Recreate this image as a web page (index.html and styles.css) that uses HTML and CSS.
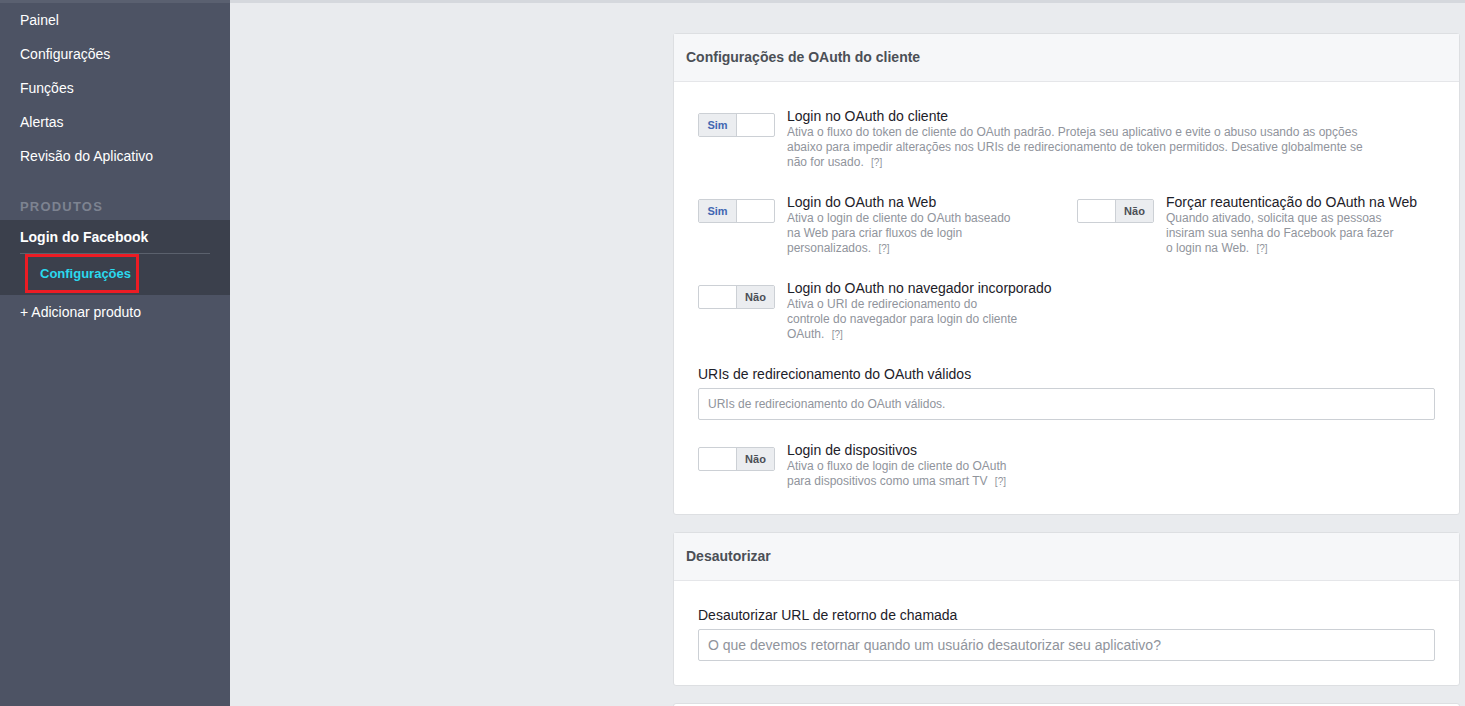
FILE: index.html
```html
<!DOCTYPE html>
<html lang="pt">
<head>
<meta charset="utf-8">
<title>Login do Facebook - Configurações</title>
<link rel="stylesheet" href="styles.css">
</head>
<body>
<div class="app">
  <nav class="sidebar">
    <a class="nav-item">Painel</a>
    <a class="nav-item">Configurações</a>
    <a class="nav-item">Funções</a>
    <a class="nav-item">Alertas</a>
    <a class="nav-item">Revisão do Aplicativo</a>
    <div class="nav-heading">PRODUTOS</div>
    <div class="nav-group">
      <a class="nav-item nav-product">Login do Facebook</a>
      <a class="nav-sub">Configurações</a>
    </div>
    <a class="nav-item">+ Adicionar produto</a>
  </nav>
  <main class="main">
    <section class="card">
      <header class="card-head">Configurações de OAuth do cliente</header>
      <div class="card-body">
        <div class="setting">
          <div class="toggle on"><span class="t-left">Sim</span><span class="t-right"></span></div>
          <div class="s-text">
            <div class="s-title">Login no OAuth do cliente</div>
            <div class="s-desc">Ativa o fluxo do token de cliente do OAuth padrão. Proteja seu aplicativo e evite o abuso usando as opções<br>abaixo para impedir alterações nos URIs de redirecionamento de token permitidos. Desative globalmente se<br>não for usado. <span class="help">[?]</span></div>
          </div>
        </div>
        <div class="pair">
          <div class="setting">
            <div class="toggle on"><span class="t-left">Sim</span><span class="t-right"></span></div>
            <div class="s-text">
              <div class="s-title">Login do OAuth na Web</div>
              <div class="s-desc">Ativa o login de cliente do OAuth baseado<br>na Web para criar fluxos de login<br>personalizados. <span class="help">[?]</span></div>
            </div>
          </div>
          <div class="setting">
            <div class="toggle off"><span class="t-left"></span><span class="t-right">Não</span></div>
            <div class="s-text">
              <div class="s-title">Forçar reautenticação do OAuth na Web</div>
              <div class="s-desc">Quando ativado, solicita que as pessoas<br>insiram sua senha do Facebook para fazer<br>o login na Web. <span class="help">[?]</span></div>
            </div>
          </div>
        </div>
        <div class="setting">
          <div class="toggle off"><span class="t-left"></span><span class="t-right">Não</span></div>
          <div class="s-text">
            <div class="s-title">Login do OAuth no navegador incorporado</div>
            <div class="s-desc">Ativa o URI de redirecionamento do<br>controle do navegador para login do cliente<br>OAuth. <span class="help">[?]</span></div>
          </div>
        </div>
        <div class="field">
          <label class="f-label">URIs de redirecionamento do OAuth válidos</label>
          <div class="f-input small">URIs de redirecionamento do OAuth válidos.</div>
        </div>
        <div class="setting after-field">
          <div class="toggle off"><span class="t-left"></span><span class="t-right">Não</span></div>
          <div class="s-text">
            <div class="s-title">Login de dispositivos</div>
            <div class="s-desc">Ativa o fluxo de login de cliente do OAuth<br>para dispositivos como uma smart TV <span class="help">[?]</span></div>
          </div>
        </div>
      </div>
    </section>
    <section class="card">
      <header class="card-head">Desautorizar</header>
      <div class="card-body body-2">
        <div class="field">
          <label class="f-label">Desautorizar URL de retorno de chamada</label>
          <div class="f-input">O que devemos retornar quando um usuário desautorizar seu aplicativo?</div>
        </div>
      </div>
    </section>
    <section class="card card-next"></section>
  </main>
</div>
</body>
</html>
```
FILE: styles.css
```css
* { box-sizing: border-box; }
html, body { margin: 0; padding: 0; }
body {
  font-family: "Liberation Sans", Arial, Helvetica, sans-serif;
  background: #e9ebee;
  color: #1d2129;
  width: 1465px;
  height: 706px;
  overflow: hidden;
}
.app {
  display: flex;
  height: 706px;
}
.sidebar {
  width: 230px;
  flex: none;
  background: #4d5364;
  border-top: 3px solid #5a6070;
  display: flex;
  flex-direction: column;
}
.nav-item {
  display: block;
  color: #fff;
  font-size: 14px;
  line-height: 14px;
  padding: 10px 20px 10px 20px;
  height: 34px;
}
.nav-heading {
  color: #7d8391;
  font-size: 13px;
  font-weight: bold;
  letter-spacing: 1.2px;
  line-height: 16px;
  padding: 26px 20px 5px 20px;
}
.nav-group {
  background: #3b404c;
  padding-bottom: 2px;
}
.nav-product {
  font-weight: bold;
  border-bottom: 1px solid #5b616d;
  margin: 0 20px;
  padding: 10px 0 9px 0;
}
.nav-sub {
  display: inline-block;
  margin-left: 25px;
  border: 3px solid #ec1c24;
  color: #2ad9ee;
  font-size: 13px;
  font-weight: bold;
  line-height: 15px;
  height: 39px;
  padding: 9px 5px 9px 12px;
}
.main {
  flex: 1;
  border-top: 3px solid #d5d8dd;
  padding: 30px 5px 0 443px;
  display: flex;
  flex-direction: column;
  gap: 17px;
}
.card {
  background: #fff;
  border: 1px solid #dddfe2;
  border-radius: 3px;
  flex: none;
}
.card-head {
  background: #f6f7f9;
  border-bottom: 1px solid #e5e6e9;
  height: 48px;
  padding: 15px 12px 0 12px;
  font-size: 14px;
  line-height: 16px;
  font-weight: bold;
  color: #4b4f56;
}
.card-body {
  padding: 25px 24px 25px 24px;
  display: flex;
  flex-direction: column;
  gap: 23px;
}
.after-field { margin-top: -2px; }
.body-2 { padding-top: 25px; padding-bottom: 24px; }
.setting {
  display: flex;
  gap: 12px;
}
.pair {
  display: grid;
  grid-template-columns: 379px 1fr;
}
.toggle {
  margin-top: 6px;
  width: 77px;
  height: 24px;
  border: 1px solid #ccd0d5;
  border-radius: 2px;
  display: flex;
  flex: none;
  overflow: hidden;
}
.t-left, .t-right {
  width: 38px;
  height: 22px;
  font-size: 11px;
  font-weight: bold;
  line-height: 22px;
  text-align: center;
}
.t-left { border-right: 1px solid #ccd0d5; }
.t-right { flex: 1; }
.on .t-left { background: #ebedf0; color: #4267b2; }
.off .t-right { background: #ebedf0; color: #4b4f56; }
.s-title {
  font-size: 14px;
  line-height: 18px;
  color: #1d2129;
}
.s-desc {
  font-size: 12px;
  line-height: 15px;
  color: #90949c;
}
.help {
  font-size: 10px;
  margin-left: 4px;
  color: #90949c;
}
.field {
  display: flex;
  flex-direction: column;
  gap: 5px;
}
.f-label {
  font-size: 14px;
  line-height: 18px;
  color: #1d2129;
}
.f-input {
  height: 32px;
  border: 1px solid #ccd0d5;
  border-radius: 2px;
  padding: 0 9px;
  font-size: 14px;
  line-height: 30px;
  color: #90949c;
}
.f-input.small { font-size: 12px; }
.card-next { height: 40px; }
```
